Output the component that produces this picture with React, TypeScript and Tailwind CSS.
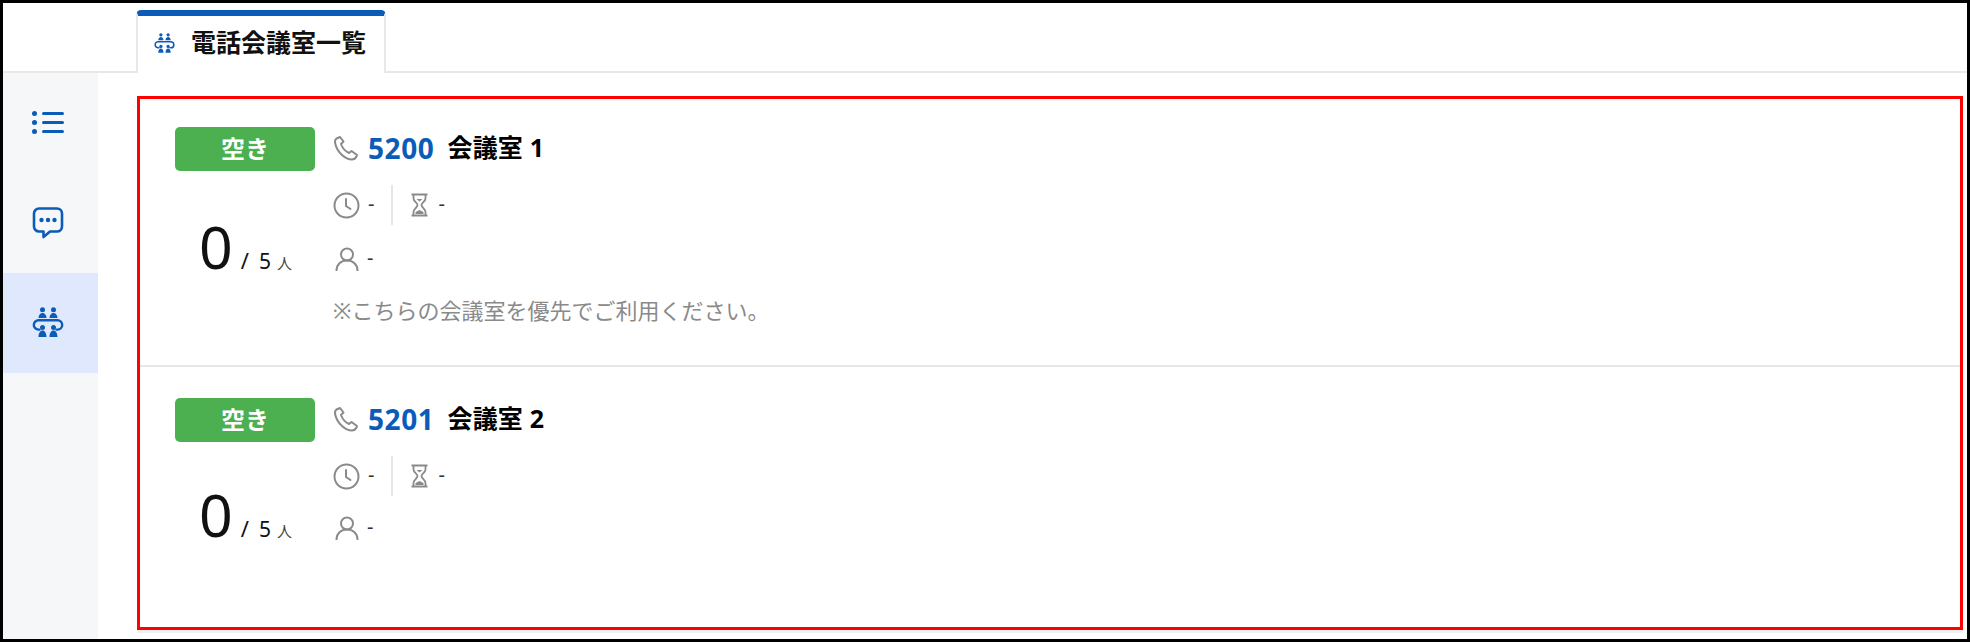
import React from 'react';

const fontStack = 'font-["Noto_Sans","Noto_Sans_CJK_JP",sans-serif]';

const ListIcon = () => (
  <svg width="32" height="24" viewBox="0 0 32 24" fill="#0a5cb8">
    <circle cx="2.5" cy="2.5" r="2.5" />
    <circle cx="2.5" cy="11.5" r="2.5" />
    <circle cx="2.5" cy="20.5" r="2.5" />
    <rect x="10" y="1" width="22" height="3" rx="1.5" />
    <rect x="10" y="10" width="22" height="3" rx="1.5" />
    <rect x="10" y="19" width="22" height="3" rx="1.5" />
  </svg>
);

const ChatIcon = () => (
  <svg width="32" height="32" viewBox="0 0 32 32">
    <path
      d="M7 1.500h18a5 5 0 0 1 5 5v13a5 5 0 0 1-5 5h-7l-6.500 5.500v-5.500H7a5 5 0 0 1-5-5v-13a5 5 0 0 1 5-5z"
      fill="none"
      stroke="#0a5cb8"
      strokeWidth="2.600"
      strokeLinejoin="round"
    />
    <circle cx="9.500" cy="13" r="2.200" fill="#0a5cb8" />
    <circle cx="16" cy="13" r="2.200" fill="#0a5cb8" />
    <circle cx="22.500" cy="13" r="2.200" fill="#0a5cb8" />
  </svg>
);

const MeetingIcon = ({ size }: { size: number }) => (
  <svg width={size} height={size} viewBox="0 0 32 32" fill="#0a5cb8">
    <circle cx="10.500" cy="2.800" r="2.500" />
    <circle cx="21.500" cy="2.800" r="2.500" />
    <path d="M6.500 11c0-3 1.800-5 4-5s4 2 4 5zM17.500 11c0-3 1.800-5 4-5s4 2 4 5z" />
    <path
      d="M6.500 13.200H25.500a4.700 4.700 0 0 1 0 9.400H24.500M7.500 22.600H6.500a4.700 4.700 0 0 1 0-9.400"
      fill="none"
      stroke="#0a5cb8"
      strokeWidth="2.400"
      strokeLinecap="round"
    />
    <circle cx="10.500" cy="20.500" r="2.500" />
    <circle cx="21.500" cy="20.500" r="2.500" />
    <path d="M6.500 30c0-4 1.800-6.500 4-6.500s4 2.500 4 6.500zM17.500 30c0-4 1.800-6.500 4-6.500s4 2.500 4 6.500z" />
  </svg>
);

const PhoneIcon = () => (
  <svg width="26" height="26" viewBox="0 0 26 26" fill="none" stroke="#8a8a8a" strokeWidth="2" strokeLinejoin="round">
    <path d="M7 2 3.500 3.500C2 4.500 1.800 6.500 2.200 8.500c1 4.500 3.500 8.500 6.800 11.500 3 2.800 6.500 4.500 10 4.500 2 0 3.500-1 4.500-3l.5-1.500-5.500-4-2.500 2c-3.500-1.500-6.500-5-8-9l2.500-2.500z" />
  </svg>
);

const ClockIcon = () => (
  <svg width="27" height="27" viewBox="0 0 27 27" fill="none" stroke="#8a8a8a" strokeWidth="2" strokeLinecap="round">
    <circle cx="13.500" cy="13.500" r="12" />
    <path d="M13 7v7l4.500 3" />
  </svg>
);

const HourglassIcon = () => (
  <svg width="17" height="24" viewBox="0 0 17 24" fill="none" stroke="#8a8a8a" strokeWidth="1.800">
    <path d="M0.500 1.500h16M0.500 22.500h16M2.500 1.500v4c0 3 4 4 4 6.500S2.500 16 2.500 19v3.500M14.500 1.500v4c0 3-4 4-4 6.500s4 4 4 7v3.500" />
    <path d="M5.500 6h6l-3 2.500zM4.500 21v-2l4-2 4 2v2z" fill="#8a8a8a" stroke="none" />
  </svg>
);

const PersonIcon = () => (
  <svg width="24" height="24" viewBox="0 0 24 24" fill="none" stroke="#8a8a8a" strokeWidth="2" strokeLinecap="round">
    <circle cx="12" cy="7.500" r="6" />
    <path d="M1.500 23.500c0-6 4.500-10 10.500-10s10.500 4 10.500 10" />
  </svg>
);

const Dash = () => <span className="text-[20px] leading-none text-[#333]">-</span>;

interface Room {
  ext: string;
  name: string;
  note?: string;
}

const rooms: Room[] = [
  { ext: '5200', name: '会議室 1', note: '※こちらの会議室を優先でご利用ください。' },
  { ext: '5201', name: '会議室 2' },
];

const RoomRow = ({ room, last }: { room: Room; last: boolean }) => (
  <div className={`flex pl-[35px] ${last ? 'flex-1 pt-[31px]' : 'h-[268px] pt-[28px] border-b-2 border-[#e6e6e6]'}`}>
    <div className="w-[140px] flex flex-col shrink-0">
      <div className="h-[44px] rounded-[5px] bg-[#4caf50] flex items-center justify-center text-[24px] font-bold text-white">
        空き
      </div>
      <div className={`${room.note ? 'mt-[40px]' : 'mt-[37px]'} ml-[24px] flex items-baseline whitespace-nowrap text-[#111]`}>
        <span className="text-[59px] leading-[70px]">0</span>
        <span className="ml-[8px] text-[22px]">/</span>
        <span className="ml-[10px] text-[21px]">5</span>
        <span className="ml-[6px] text-[15px] text-[#444]">人</span>
      </div>
    </div>
    <div className="ml-[18px] flex flex-col">
      <div className="h-[44px] flex items-center -mt-[1px]">
        <PhoneIcon />
        <span className="ml-[9px] text-[28px] font-bold tracking-[0.6px] text-[#0a5cb8]">{room.ext}</span>
        <span className="ml-[13px] text-[25px] font-bold tracking-[0.2px] text-black">{room.name}</span>
      </div>
      <div className="mt-[15px] h-[40px] flex items-center">
        <ClockIcon />
        <span className="ml-[8px]"><Dash /></span>
        <div className="ml-[17px] w-[2px] h-[40px] bg-[#e6e6e6]" />
        <div className="ml-[18px]"><HourglassIcon /></div>
        <span className="ml-[10px]"><Dash /></span>
      </div>
      <div className={`${room.note ? 'mt-[22px]' : 'mt-[20px]'} h-[24px] flex items-center pl-[2px]`}>
        <PersonIcon />
        <span className="ml-[8px]"><Dash /></span>
      </div>
      {room.note && <p className="mt-[24px] text-[22px] leading-[30px] text-[#8a8a8a] whitespace-nowrap">{room.note}</p>}
    </div>
  </div>
);

export default function App() {
  return (
    <div className={`w-[1970px] h-[642px] border-[3px] border-black bg-white flex flex-col overflow-hidden ${fontStack}`}>
      {/* tab bar */}
      <div className="h-[70px] shrink-0 flex items-end border-b-2 border-[#e8e8e8] pl-[133px]">
        <div className="w-[250px] h-[63px] -mb-[2px] bg-white rounded-t-[5px] border-x-2 border-[#e8e8e8] border-t-[6px] border-t-[#0a5cb8] flex items-center pl-[16px] pb-[3px]">
          <MeetingIcon size={21} />
          <span className="ml-[16px] text-[25px] font-bold text-[#111] whitespace-nowrap">電話会議室一覧</span>
        </div>
      </div>

      <div className="flex-1 flex min-h-0">
        {/* side nav */}
        <div className="w-[95px] shrink-0 bg-[#f5f7f9] flex flex-col pr-[5px]">
          <div className="h-[100px] flex items-center justify-center"><ListIcon /></div>
          <div className="h-[100px] flex items-center justify-center"><ChatIcon /></div>
          <div className="h-[100px] -mr-[5px] pr-[5px] bg-[#dfe8fd] flex items-center justify-center"><MeetingIcon size={32} /></div>
        </div>

        {/* room list */}
        <div className="flex-1 pl-[39px] pr-[4px] pt-[23px] pb-[9px] flex flex-col">
          <div className="flex-1 border-[3px] border-[#ff0000] flex flex-col shadow-[0_3px_0_#f0f0f0]">
            {rooms.map((room, i) => (
              <RoomRow key={room.ext} room={room} last={i === rooms.length - 1} />
            ))}
          </div>
        </div>
      </div>
    </div>
  );
}
